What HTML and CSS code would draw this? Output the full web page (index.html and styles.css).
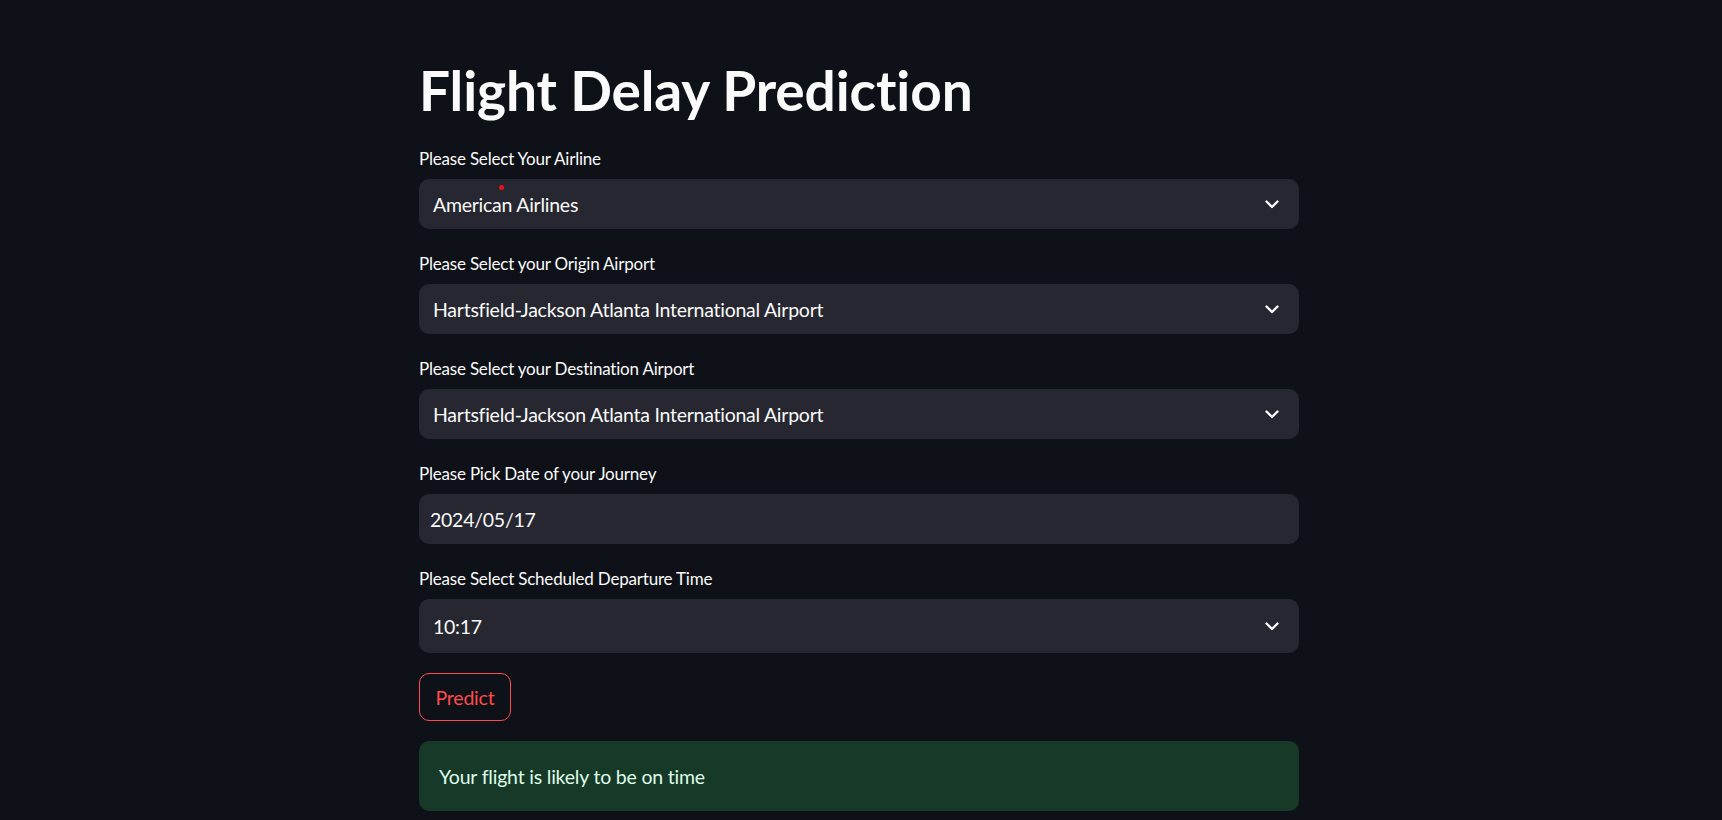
FILE: index.html
```html
<!DOCTYPE html>
<html lang="en">
<head>
<meta charset="utf-8">
<title>Flight Delay Prediction</title>
<link rel="stylesheet" href="styles.css">
</head>
<body>
<div class="app">
  <main class="block">
    <h1 class="title">Flight Delay Prediction</h1>

    <div class="field">
      <label class="label">Please Select Your Airline</label>
      <div class="select">
        <span class="value">American Airlines</span>
        <span class="dot"></span>
        <svg class="chev" viewBox="0 0 14 9" width="14" height="9"><path d="M1.5 1.5 L7 7 L12.5 1.5" fill="none" stroke="#fafafa" stroke-width="2.4" stroke-linecap="round" stroke-linejoin="round"/></svg>
      </div>
    </div>

    <div class="field">
      <label class="label">Please Select your Origin Airport</label>
      <div class="select">
        <span class="value">Hartsfield-Jackson Atlanta International Airport</span>
        <svg class="chev" viewBox="0 0 14 9" width="14" height="9"><path d="M1.5 1.5 L7 7 L12.5 1.5" fill="none" stroke="#fafafa" stroke-width="2.4" stroke-linecap="round" stroke-linejoin="round"/></svg>
      </div>
    </div>

    <div class="field">
      <label class="label">Please Select your Destination Airport</label>
      <div class="select">
        <span class="value">Hartsfield-Jackson Atlanta International Airport</span>
        <svg class="chev" viewBox="0 0 14 9" width="14" height="9"><path d="M1.5 1.5 L7 7 L12.5 1.5" fill="none" stroke="#fafafa" stroke-width="2.4" stroke-linecap="round" stroke-linejoin="round"/></svg>
      </div>
    </div>

    <div class="field">
      <label class="label">Please Pick Date of your Journey</label>
      <div class="select date">
        <span class="value">2024/05/17</span>
      </div>
    </div>

    <div class="field">
      <label class="label">Please Select Scheduled Departure Time</label>
      <div class="select time">
        <span class="value">10:17</span>
        <svg class="chev" viewBox="0 0 14 9" width="14" height="9"><path d="M1.5 1.5 L7 7 L12.5 1.5" fill="none" stroke="#fafafa" stroke-width="2.4" stroke-linecap="round" stroke-linejoin="round"/></svg>
      </div>
    </div>

    <div class="actions">
      <button class="btn" type="button">Predict</button>
    </div>

    <div class="alert">Your flight is likely to be on time</div>
  </main>
</div>
</body>
</html>
```

FILE: styles.css
```css
* { box-sizing: border-box; }
html, body {
  margin: 0;
  padding: 0;
  background: #0e1117;
  color: #fafafa;
  font-family: "Lato", "Liberation Sans", sans-serif;
  overflow: hidden;
}
.app {
  display: flex;
  justify-content: center;
  padding-right: 4px;
  min-height: 820px;
}
.block {
  width: 880px;
  display: flex;
  flex-direction: column;
  gap: 20px;
  padding-top: 57px;
}
.title {
  margin: 0 0 1px;
  font-size: 55px;
  line-height: 66px;
  font-weight: 700;
  letter-spacing: -0.1px;
}
.field {
  display: flex;
  flex-direction: column;
}
.label {
  display: block;
  height: 30px;
  margin-bottom: 5px;
  font-size: 17px;
  line-height: 30px;
  letter-spacing: -0.2px;
}
.select {
  position: relative;
  height: 50px;
  background: #262730;
  border-radius: 10px;
  display: flex;
  align-items: center;
  padding: 0 20px 0 14px;
}
.select.date { padding-left: 11px; }
.select.time { height: 54px; }
.value {
  flex: 1;
  font-size: 19.5px;
  letter-spacing: -0.25px;
  color: #fafafa;
}
.chev { display: block; }
.dot {
  position: absolute;
  left: 80px;
  top: 6px;
  width: 5px;
  height: 5px;
  border-radius: 50%;
  background: #e8141b;
}
.actions { display: flex; }
.btn {
  height: 48px;
  width: 92px;
  background: transparent;
  border: 1px solid #ff4b4b;
  border-radius: 10px;
  color: #ff4b4b;
  font-family: inherit;
  font-size: 19.5px;
  letter-spacing: -0.2px;
  padding: 0;
}
.alert {
  height: 70px;
  background: #173928;
  border-radius: 10px;
  padding: 0 20px;
  display: flex;
  align-items: center;
  color: #dffde9;
  font-size: 19.5px;
  letter-spacing: -0.2px;
}
```
